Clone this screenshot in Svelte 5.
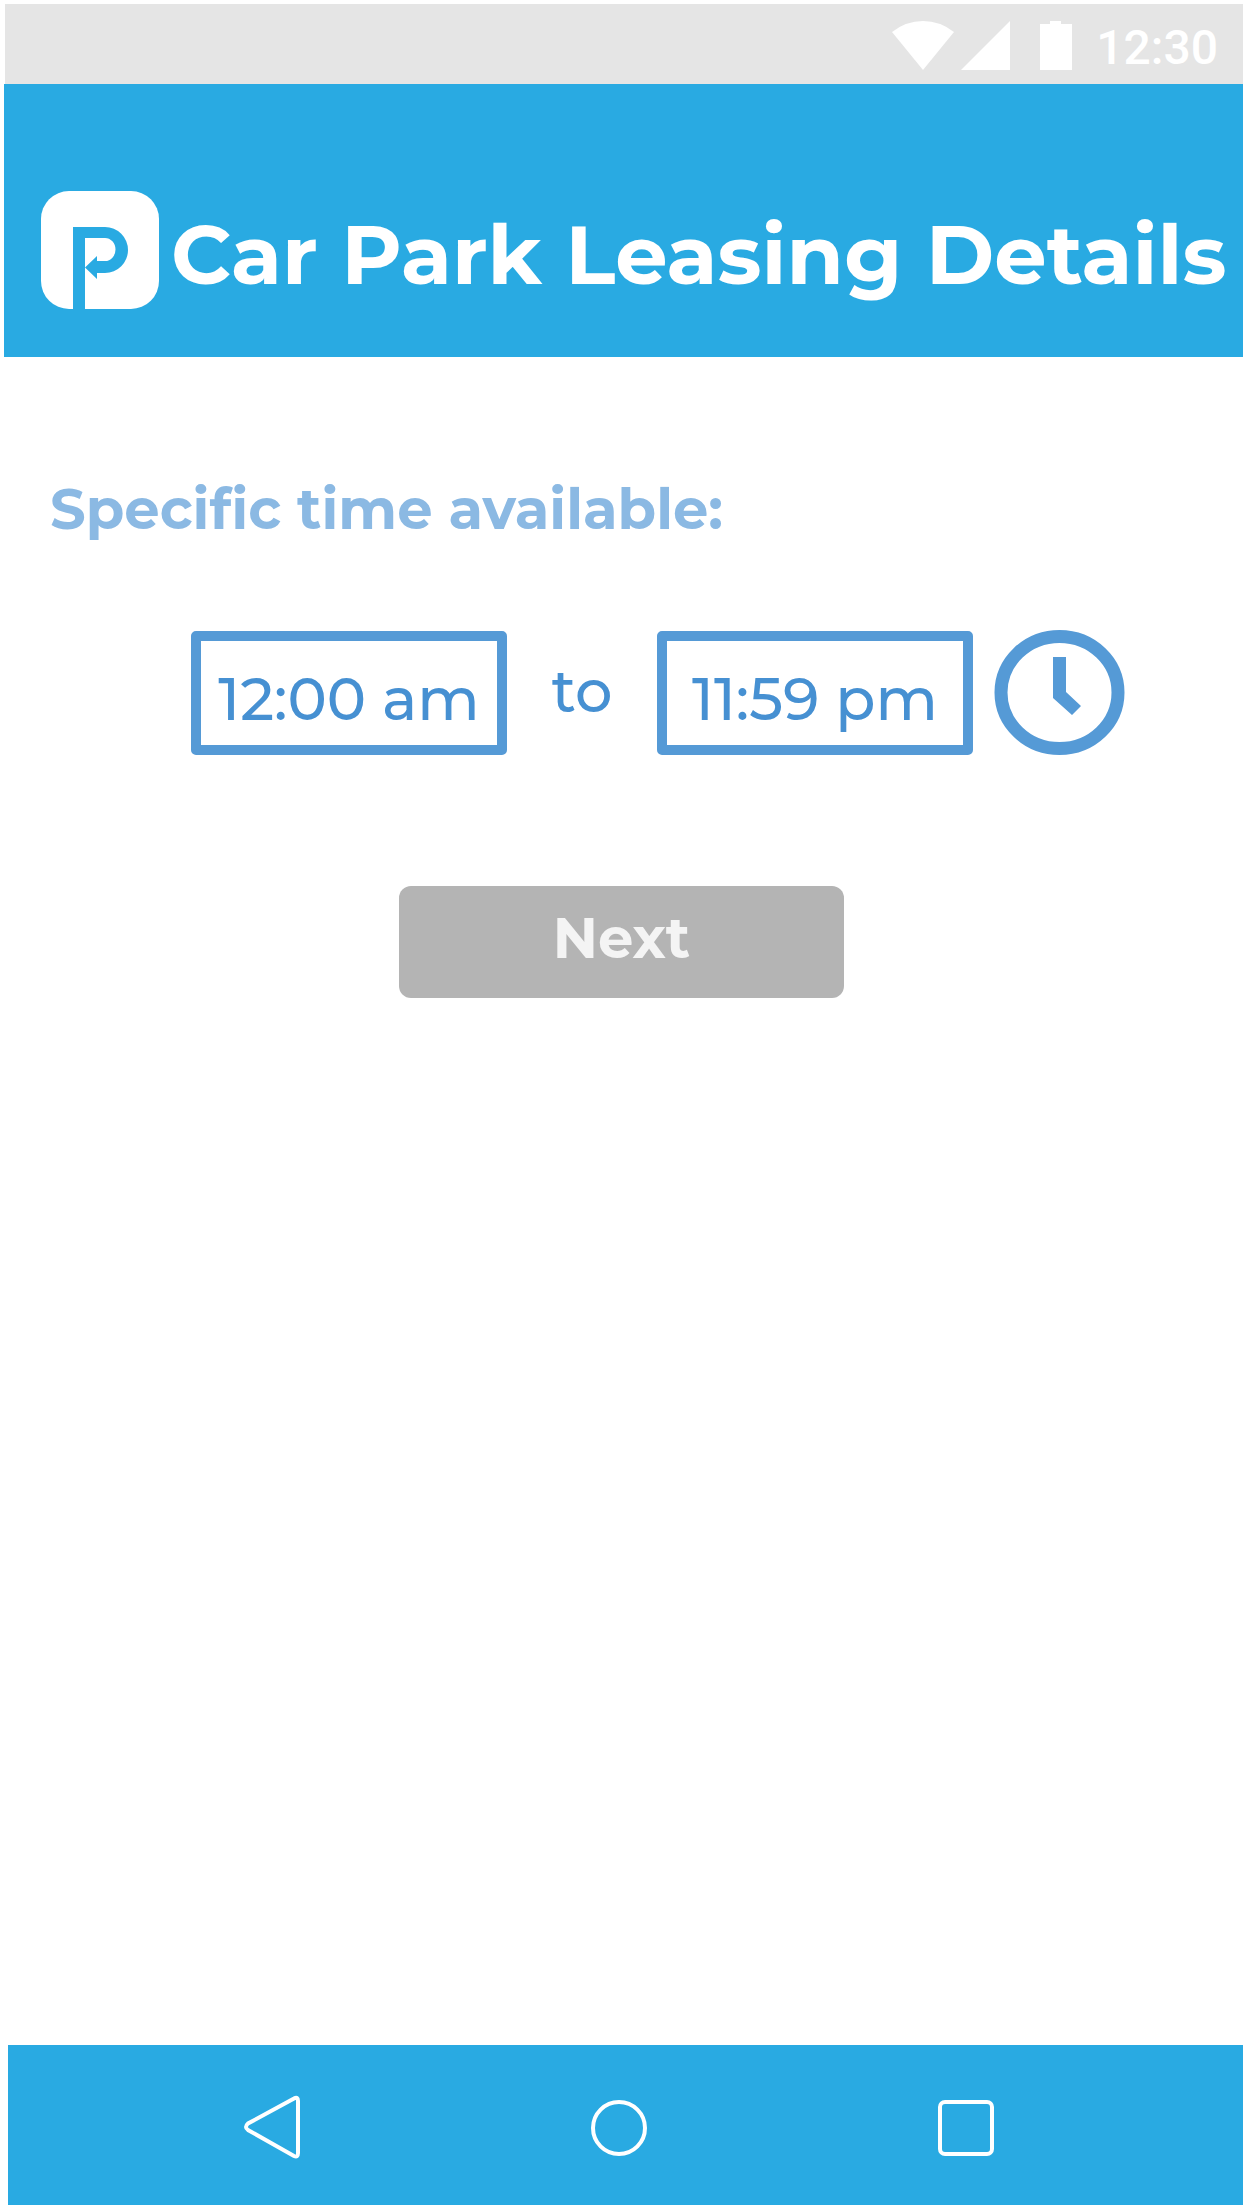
<script lang="ts">
  let from = $state('12:00 am');
  let until = $state('11:59 pm');
</script>

<div class="screen">
  <div class="status">
    <svg class="wifi" viewBox="0 0 62 49" aria-hidden="true">
      <path d="M0 11Q14 0 31 0T62 11L31 49Z" />
    </svg>
    <svg class="signal" viewBox="0 0 49 49" aria-hidden="true">
      <path d="M49 0V49H0Z" />
    </svg>
    <svg class="battery" viewBox="0 0 32 49" aria-hidden="true">
      <path d="M10 0H21V3H32V49H0V3H10Z" />
    </svg>
    <time>12:30</time>
  </div>

  <header>
    <svg class="logo" viewBox="0 0 118 118" aria-hidden="true">
      <rect width="118" height="118" rx="28" fill="#fff" />
      <path
        d="M32 118V36H64A23 23 0 0 1 64 82H56V88L44 76.500L56 65V70H64A10.500 11.500 0 0 0 64 47H44V118Z"
        fill="#29aae2"
      />
    </svg>
    <h1>Car Park Leasing Details</h1>
  </header>

  <main>
    <h2>Specific time available:</h2>
    <form onsubmit={(e) => e.preventDefault()}>
      <div class="range">
        <input id="from" aria-label="Available from" bind:value={from} />
        <label for="until">to</label>
        <input id="until" aria-label="Available until" bind:value={until} />
        <button type="button" class="clock" aria-label="Pick a time">
          <svg viewBox="0 0 131 125" aria-hidden="true">
            <ellipse cx="65.5" cy="62.500" rx="58.500" ry="56" fill="none" stroke="#559ad6" stroke-width="13" />
            <path d="M59 27H72V62L87 76L78 85L59 68Z" fill="#559ad6" />
          </svg>
        </button>
      </div>
      <button type="submit" class="next">Next</button>
    </form>
  </main>

  <nav aria-label="System navigation">
    <button type="button" aria-label="Back">
      <svg viewBox="0 0 64 64" aria-hidden="true">
        <path d="M54 3.500Q58 1 58 6V58Q58 63 54 61L8 35Q4 32 8 28.500Z" />
      </svg>
    </button>
    <button type="button" aria-label="Home">
      <svg viewBox="0 0 64 64" aria-hidden="true">
        <circle cx="32" cy="33" r="26" />
      </svg>
    </button>
    <button type="button" aria-label="Recent apps">
      <svg viewBox="0 0 64 64" aria-hidden="true">
        <rect x="6" y="7" width="52" height="52" rx="5" />
      </svg>
    </button>
  </nav>
</div>

<style>
  :global(body) {
    margin: 0;
    background: #fff;
  }

  .screen {
    display: flex;
    flex-direction: column;
    min-height: 100vh;
    box-sizing: border-box;
    padding-top: 4px;
    font-family: Montserrat, Inter, sans-serif;
  }

  svg {
    display: block;
  }

  button {
    padding: 0;
    border: 0;
    background: none;
    font: inherit;
    cursor: pointer;
  }

  .status {
    display: flex;
    justify-content: flex-end;
    align-items: center;
    height: 80px;
    box-sizing: border-box;
    margin-left: 5px;
    padding: 2px 25px 0 0;
    background: #e5e5e5;
    color: #fff;
  }

  .status svg {
    height: 49px;
    fill: #fff;
  }

  .wifi {
    width: 62px;
    margin-right: 7px;
  }

  .signal {
    width: 49px;
    margin-right: 30px;
  }

  .battery {
    width: 32px;
    margin-right: 24px;
  }

  time {
    padding-top: 6px;
    font: 500 48px/56px Roboto, sans-serif;
  }

  header {
    display: flex;
    align-items: center;
    gap: 12px;
    height: 273px;
    box-sizing: border-box;
    margin-left: 4px;
    padding: 58px 0 0 37px;
    background: #29aae2;
    color: #fff;
  }

  .logo {
    flex: none;
    width: 118px;
    height: 118px;
  }

  h1 {
    margin: 0;
    padding-top: 10px;
    font-size: 83px;
    line-height: 96px;
    font-weight: 700;
    white-space: nowrap;
  }

  main {
    flex: 1;
    padding-top: 120px;
  }

  h2 {
    margin: 0 0 0 50px;
    color: #8bb9e3;
    font-size: 56px;
    line-height: 64px;
    font-weight: 700;
  }

  form {
    display: flex;
    flex-direction: column;
    align-items: center;
    gap: 131px;
    padding-top: 89px;
  }

  .range {
    display: flex;
    align-items: center;
    align-self: flex-start;
    height: 125px;
    margin-left: 191px;
    color: #4690d2;
    font-size: 59px;
    line-height: 72px;
    font-weight: 500;
  }

  .range input {
    width: 316px;
    height: 124px;
    box-sizing: border-box;
    padding: 12px 0 0;
    border: 10px solid #559ad6;
    border-radius: 5px;
    background: #fff;
    color: inherit;
    font: inherit;
    text-align: center;
  }

  label {
    width: 150px;
    padding-bottom: 4px;
    text-align: center;
  }

  .clock {
    margin-left: 21px;
  }

  .clock svg {
    width: 131px;
    height: 125px;
  }

  .next {
    width: 445px;
    height: 112px;
    padding-bottom: 8px;
    border-radius: 12px;
    background: #b4b4b4;
    color: #f4f4f4;
    font-size: 56px;
    line-height: 64px;
    font-weight: 700;
  }

  nav {
    display: grid;
    grid-template-columns: repeat(3, 1fr);
    justify-items: center;
    align-items: start;
    height: 160px;
    box-sizing: border-box;
    margin-left: 8px;
    padding: 50px 103px 0 90px;
    background: #29aae2;
  }

  nav svg {
    width: 64px;
    height: 64px;
    fill: none;
    stroke: #fff;
    stroke-width: 4;
  }
</style>
